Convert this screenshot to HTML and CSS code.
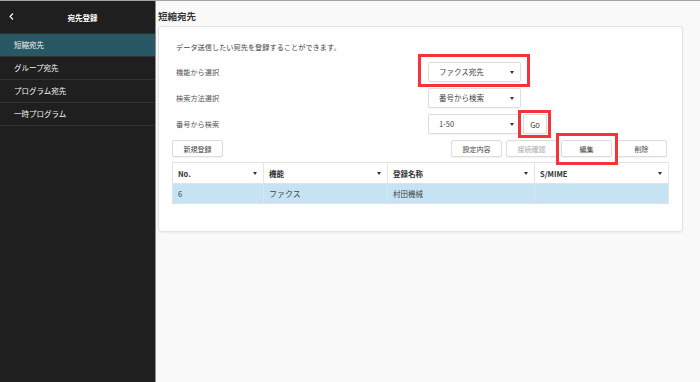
FILE: index.html
```html
<!DOCTYPE html>
<html lang="ja">
<head>
  <meta charset="UTF-8">
  <meta name="viewport" content="width=device-width, initial-scale=1.0">
  <title>宛先登録</title>
  <link rel="stylesheet" href="styles.css">
</head>
<body>
  <div class="app">
    <!-- Sidebar -->
    <aside class="sidebar">
      <div class="side-head">
        <span class="back">
          <svg width="5" height="7" viewBox="0 0 5 7"><path d="M4 0.5 L1 3.5 L4 6.5" fill="none" stroke="#fff" stroke-width="1.1"/></svg>
        </span>
        <span class="side-title">宛先登録</span>
      </div>
      <nav class="side-nav">
        <a class="nav-item active">短縮宛先</a>
        <a class="nav-item">グループ宛先</a>
        <a class="nav-item">プログラム宛先</a>
        <a class="nav-item">一時プログラム</a>
      </nav>
    </aside>

    <!-- Main Content -->
    <main class="main">
      <h1>短縮宛先</h1>

      <section class="card">
        <p class="desc">データ送信したい宛先を登録することができます。</p>

        <div class="form">
          <div class="form-label">機能から選択</div>
          <div class="mark mark-select"><div class="select">ファクス宛先</div></div>
          <div></div>

          <div class="form-label">検索方法選択</div>
          <div class="select">番号から検索</div>
          <div></div>

          <div class="form-label">番号から検索</div>
          <div class="select">1-50</div>
          <div class="mark mark-go"><button class="btn btn-go">Go</button></div>
        </div>

        <div class="toolbar">
          <button class="btn">新規登録</button>
          <div class="toolbar-right">
            <button class="btn">設定内容</button>
            <button class="btn disabled">接続確認</button>
            <div class="mark mark-edit"><button class="btn">編集</button></div>
            <button class="btn">削除</button>
          </div>
        </div>

        <table class="list">
          <colgroup>
            <col style="width: 91px">
            <col style="width: 124px">
            <col style="width: 147px">
            <col>
          </colgroup>
          <thead>
            <tr>
              <th>No.</th>
              <th>機能</th>
              <th>登録名称</th>
              <th>S/MIME</th>
            </tr>
          </thead>
          <tbody>
            <tr class="selected">
              <td>6</td>
              <td class="big">ファクス</td>
              <td>村田機械</td>
              <td></td>
            </tr>
          </tbody>
        </table>
      </section>
    </main>
  </div>
</body>
</html>
```

FILE: styles.css
```css
* {
  box-sizing: border-box;
}

body {
  font-family: "Noto Sans CJK JP", "Noto Sans", sans-serif;
  background-color: #f9f9f9;
  margin: 0;
  padding: 0;
  color: #333;
}

.app {
  display: flex;
  height: 382px;
  border-top: 1px solid #a5a5a5;
}

/* Sidebar */
.sidebar {
  width: 156px;
  flex-shrink: 0;
  background-color: #1f1f1f;
  border-right: 1px solid #8c8c8c;
  color: #fff;
}

.side-head {
  position: relative;
  height: 33px;
  display: flex;
  align-items: center;
  justify-content: center;
  border-bottom: 1px solid #2e2e2e;
  padding-left: 10px;
}

.back {
  position: absolute;
  left: 9px;
  top: 12px;
  display: flex;
}

.side-title {
  font-size: 7.5px;
  font-weight: bold;
}

.side-nav {
  display: flex;
  flex-direction: column;
}

.nav-item {
  height: 23px;
  line-height: 22px;
  padding-left: 14px;
  font-size: 7.5px;
  color: #f2f2f2;
  border-bottom: 1px solid #333;
}

.nav-item.active {
  background-color: #285864;
}

/* Main */
.main {
  flex: 1;
  padding: 0 17px 0 2px;
}

h1 {
  font-size: 9.5px;
  font-weight: bold;
  margin: 5px 0 0;
  height: 20px;
  line-height: 20px;
}

.card {
  background-color: #fff;
  border: 1px solid #e3e3e3;
  border-radius: 3px;
  box-shadow: 0 1px 2px rgba(0, 0, 0, 0.06);
  padding: 14px 13px 27px;
}

.desc {
  margin: 0 0 9px 4px;
  font-size: 7.2px;
  line-height: 12px;
  color: #444;
}

.form {
  display: grid;
  grid-template-columns: 250px 93px auto;
  row-gap: 6px;
  column-gap: 2px;
  align-items: center;
  margin-left: 4px;
}

.form-label {
  font-size: 7.2px;
  color: #555;
}

.select {
  position: relative;
  width: 93px;
  height: 20px;
  line-height: 18px;
  padding-left: 10px;
  font-size: 7.5px;
  color: #444;
  background-color: #fff;
  border: 1px solid #ddd;
  border-radius: 2px;
  box-shadow: 0 1px 1px rgba(0, 0, 0, 0.04);
}

.select::after {
  content: "";
  position: absolute;
  right: 6px;
  top: 8px;
  border-left: 2.5px solid transparent;
  border-right: 2.5px solid transparent;
  border-top: 3px solid #333;
}

/* red highlight frames */
.mark {
  position: relative;
  justify-self: start;
}

.mark::after {
  content: "";
  position: absolute;
  border: 3px solid #f5333a;
  pointer-events: none;
}

.mark-select::after {
  top: -8px;
  left: -10px;
  right: -9px;
  bottom: -5px;
}

.mark-go::after {
  top: -4px;
  left: -5px;
  right: -4px;
  bottom: -4px;
}

.mark-edit::after {
  top: -7px;
  left: -5px;
  right: -6px;
  bottom: -8px;
}

.btn {
  display: block;
  width: 51px;
  height: 17px;
  padding: 0;
  font-family: inherit;
  font-size: 7px;
  color: #444;
  background-color: #fff;
  border: 1px solid #dcdcdc;
  border-radius: 2px;
  box-shadow: 0 1px 1px rgba(0, 0, 0, 0.05);
}

.btn.disabled {
  color: #aaa;
}

.btn-go {
  width: 24px;
  height: 20px;
  font-size: 7.5px;
  color: #333;
}

.toolbar {
  display: flex;
  justify-content: space-between;
  align-items: center;
  margin-top: 6px;
  padding-right: 2px;
}

.toolbar-right {
  display: flex;
  gap: 4px;
}

/* Table */
.list {
  width: 100%;
  margin-top: 5px;
  border-collapse: collapse;
  table-layout: fixed;
  border: 1px solid #e2e2e2;
  font-size: 7.5px;
}

.list th {
  position: relative;
  height: 21px;
  padding: 0 5px;
  text-align: left;
  font-weight: bold;
  color: #333;
  border-right: 1px solid #e6e6e6;
  border-bottom: 1px solid #e2e2e2;
}

.list th::after {
  content: "";
  position: absolute;
  right: 6px;
  top: 9px;
  border-left: 2.5px solid transparent;
  border-right: 2.5px solid transparent;
  border-top: 3px solid #333;
}

.list td {
  height: 20px;
  padding: 0 5px;
  color: #444;
  border-right: 1px solid #d4e8f2;
}

.list td.big {
  font-size: 8px;
}

.list tr.selected td {
  background-color: #c5e3f2;
}
```
